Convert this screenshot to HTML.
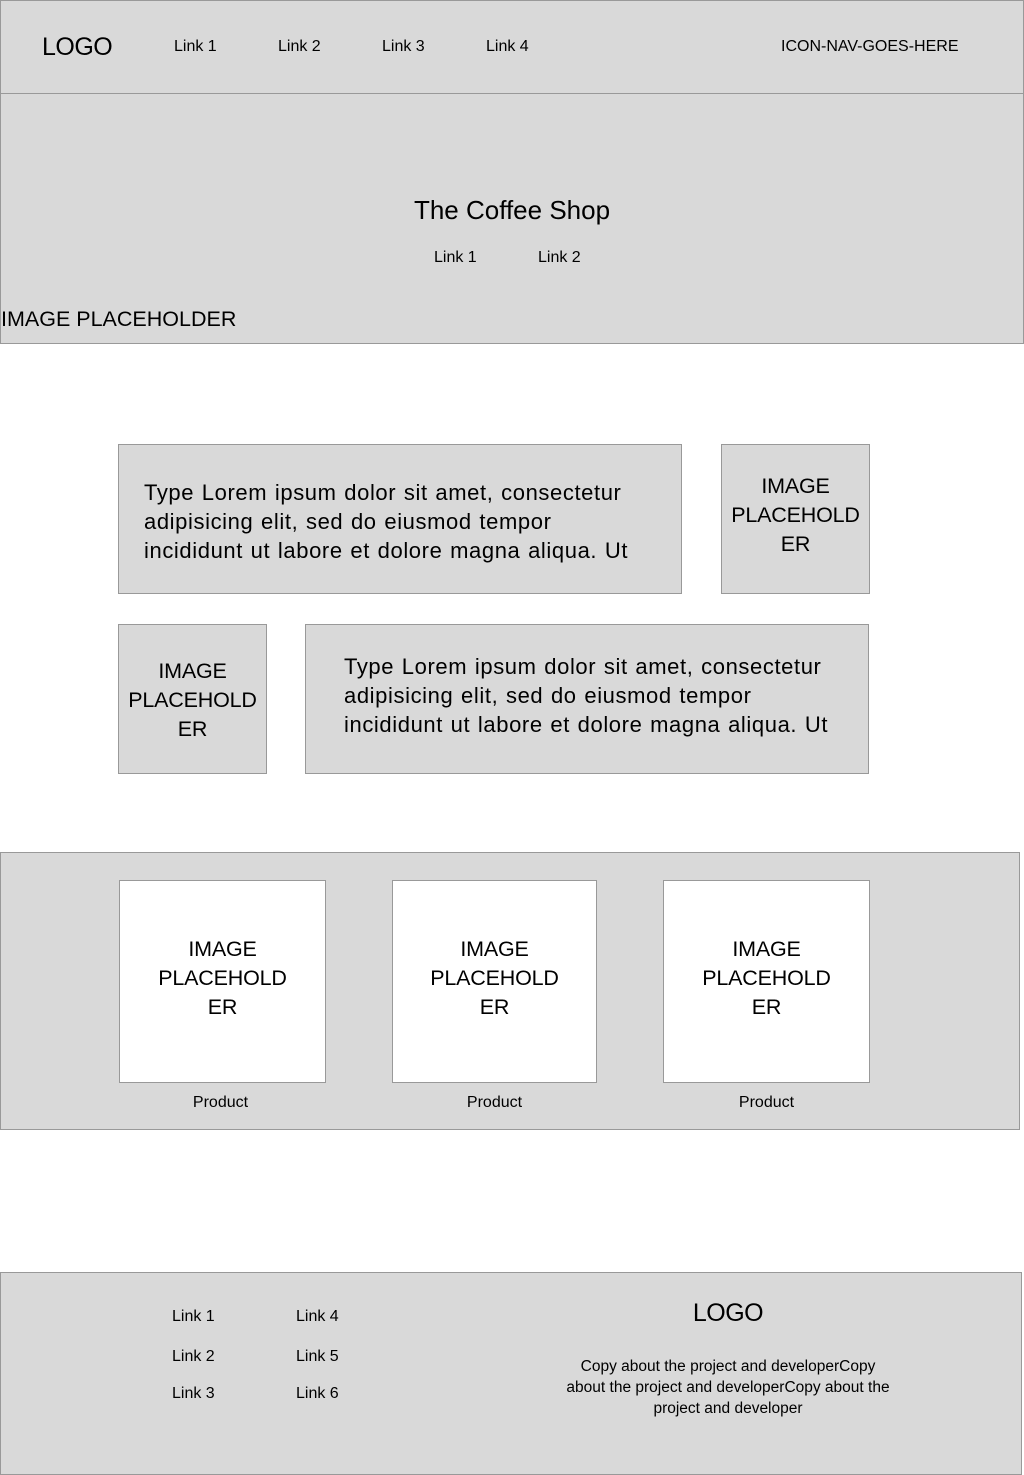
<!DOCTYPE html>
<html><head><meta charset="utf-8"><style>
*{margin:0;padding:0;box-sizing:border-box}
body{width:1024px;height:1475px;background:#fff;position:relative;overflow:hidden;font-family:"Liberation Sans",sans-serif;color:#000}
.b{position:absolute;background:#d9d9d9;border:1px solid #999}
.w{position:absolute;background:#fff;border:1px solid #999}
.t{position:absolute;white-space:nowrap;line-height:1}
.c{position:absolute;text-align:center;font-size:21.5px;line-height:29px;letter-spacing:-0.2px}
.p{font-size:22px;line-height:29px;position:absolute;white-space:nowrap;letter-spacing:0.6px;word-spacing:1px}
</style></head><body>
<div class="b" style="left:0;top:0;width:1024px;height:95px;border-bottom:2px solid #999"></div>
<div class="t" style="left:42px;top:35px;font-size:25px;letter-spacing:-0.5px">LOGO</div>
<div class="t" style="left:174px;top:39px;font-size:16px">Link 1</div>
<div class="t" style="left:278px;top:39px;font-size:16px">Link 2</div>
<div class="t" style="left:382px;top:39px;font-size:16px">Link 3</div>
<div class="t" style="left:486px;top:39px;font-size:16px">Link 4</div>
<div class="t" style="left:781px;top:39px;font-size:16px">ICON-NAV-GOES-HERE</div>

<div class="b" style="left:0;top:94px;width:1024px;height:250px;border-top:none"></div>
<div class="t" style="left:0;top:197px;width:1024px;text-align:center;font-size:26px">The Coffee Shop</div>
<div class="t" style="left:434px;top:250px;font-size:16px">Link 1</div>
<div class="t" style="left:538px;top:250px;font-size:16px">Link 2</div>
<div class="t" style="left:1px;top:309px;font-size:21.5px">IMAGE PLACEHOLDER</div>

<div class="b" style="left:118px;top:444px;width:564px;height:150px"></div>
<div class="p" style="left:144px;top:478px">Type Lorem ipsum dolor sit amet, consectetur<br>adipisicing elit, sed do eiusmod tempor<br>incididunt ut labore et dolore magna aliqua. Ut</div>
<div class="b" style="left:721px;top:444px;width:149px;height:150px"></div>
<div class="c" style="left:721px;top:472px;width:149px">IMAGE<br>PLACEHOLD<br>ER</div>

<div class="b" style="left:118px;top:624px;width:149px;height:150px"></div>
<div class="c" style="left:118px;top:657px;width:149px">IMAGE<br>PLACEHOLD<br>ER</div>
<div class="b" style="left:305px;top:624px;width:564px;height:150px"></div>
<div class="p" style="left:344px;top:652px">Type Lorem ipsum dolor sit amet, consectetur<br>adipisicing elit, sed do eiusmod tempor<br>incididunt ut labore et dolore magna aliqua. Ut</div>

<div class="b" style="left:0;top:852px;width:1020px;height:278px"></div>
<div class="w" style="left:119px;top:880px;width:207px;height:203px"></div>
<div class="c" style="left:119px;top:935px;width:207px">IMAGE<br>PLACEHOLD<br>ER</div>
<div class="t" style="left:119px;top:1095px;width:203px;text-align:center;font-size:16px">Product</div>
<div class="w" style="left:392px;top:880px;width:205px;height:203px"></div>
<div class="c" style="left:392px;top:935px;width:205px">IMAGE<br>PLACEHOLD<br>ER</div>
<div class="t" style="left:392px;top:1095px;width:205px;text-align:center;font-size:16px">Product</div>
<div class="w" style="left:663px;top:880px;width:207px;height:203px"></div>
<div class="c" style="left:663px;top:935px;width:207px">IMAGE<br>PLACEHOLD<br>ER</div>
<div class="t" style="left:663px;top:1095px;width:207px;text-align:center;font-size:16px">Product</div>

<div class="b" style="left:0;top:1272px;width:1022px;height:203px"></div>
<div class="t" style="left:172px;top:1309px;font-size:16px">Link 1</div>
<div class="t" style="left:172px;top:1349px;font-size:16px">Link 2</div>
<div class="t" style="left:172px;top:1386px;font-size:16px">Link 3</div>
<div class="t" style="left:296px;top:1309px;font-size:16px">Link 4</div>
<div class="t" style="left:296px;top:1349px;font-size:16px">Link 5</div>
<div class="t" style="left:296px;top:1386px;font-size:16px">Link 6</div>
<div class="t" style="left:628px;top:1301px;width:200px;text-align:center;font-size:25px;letter-spacing:-0.5px">LOGO</div>
<div style="position:absolute;left:560px;top:1356px;width:336px;text-align:center;font-size:15.5px;line-height:21px">Copy about the project and developerCopy about the project and developerCopy about the project and developer</div>
</body></html>
